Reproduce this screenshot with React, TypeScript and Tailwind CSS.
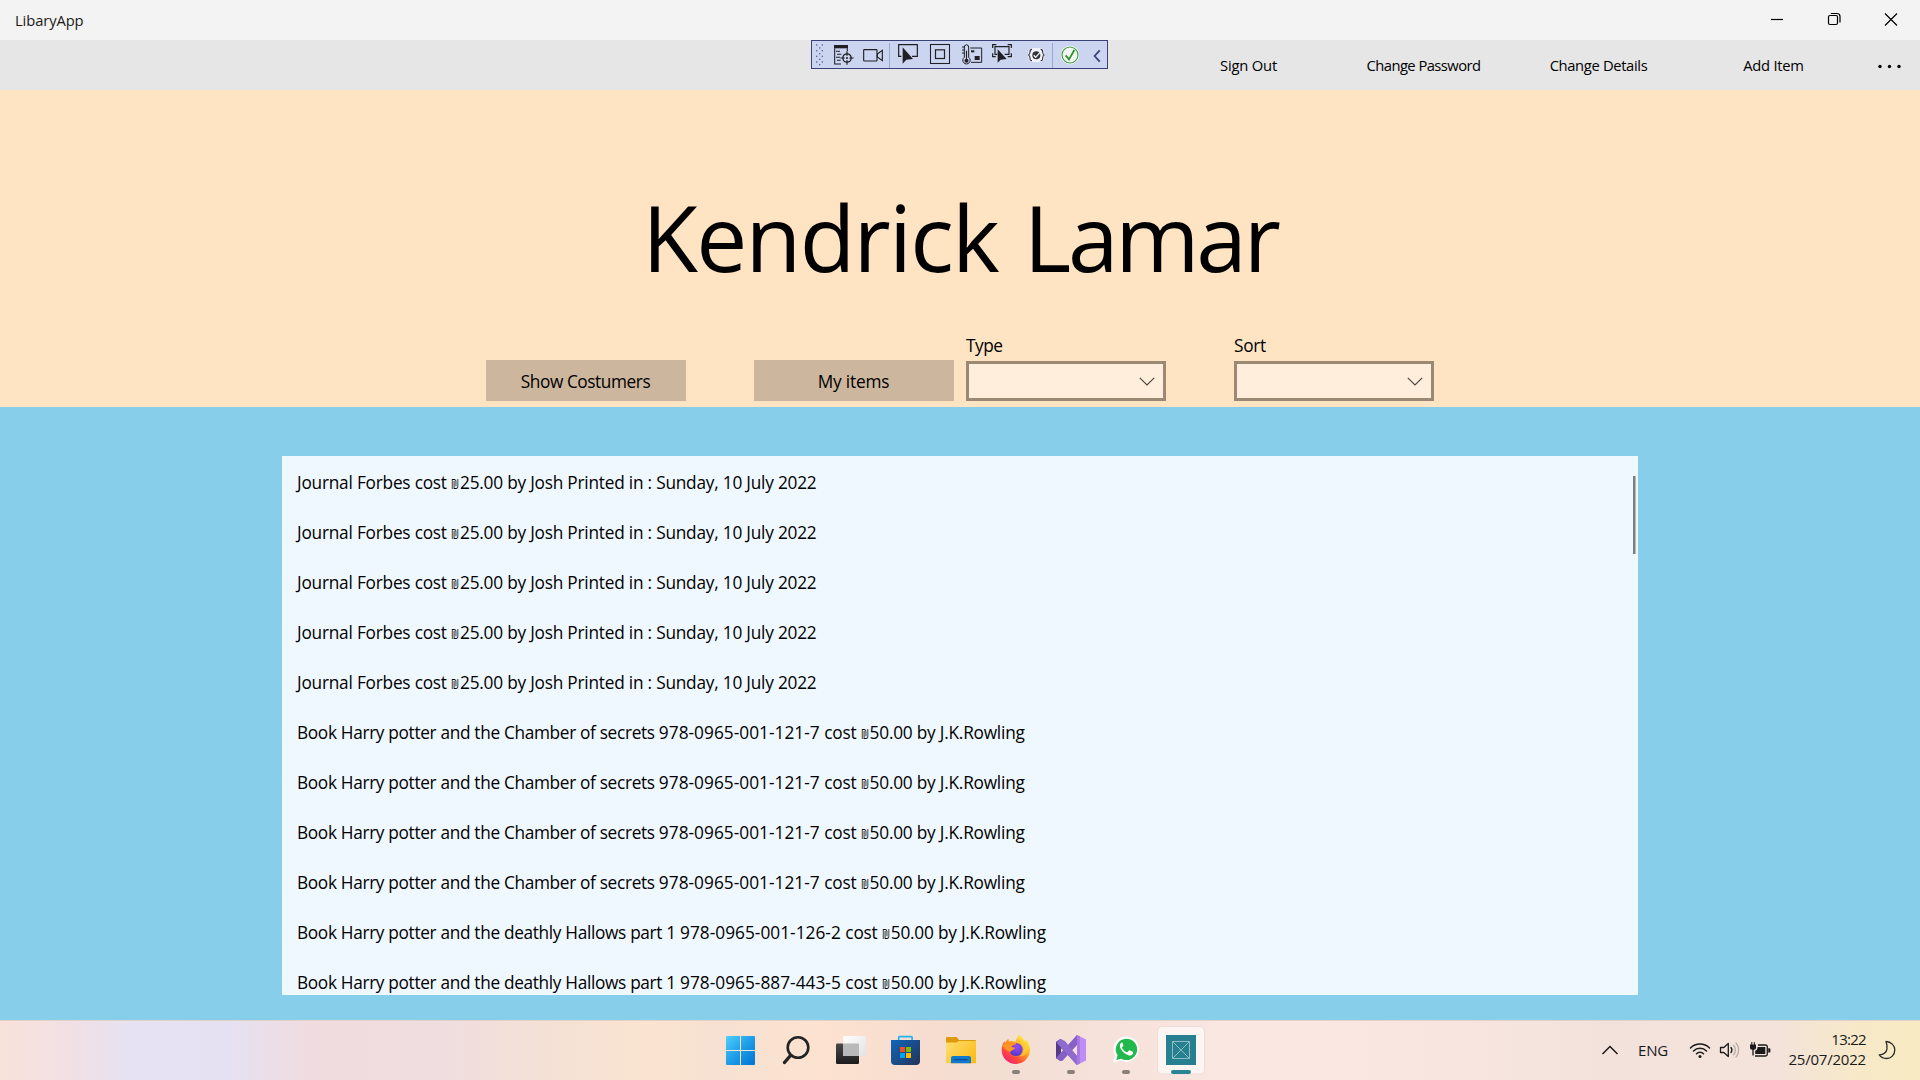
import type { ReactNode } from "react";

const SEGOE = "font-['Open_Sans','Liberation_Sans',sans-serif]";

type Item = { title: string; isbn?: string; price: string };

const journal: Item = {
  title: "Journal Forbes ",
  price: "25.00 by Josh Printed in : Sunday, 10 July 2022",
};
const chamber: Item = {
  title: "Book Harry potter and the Chamber of secrets ",
  isbn: "978-0965-001-121-7 ",
  price: "50.00 by J.K.Rowling",
};
const items: Item[] = [
  journal,
  journal,
  journal,
  journal,
  journal,
  chamber,
  chamber,
  chamber,
  chamber,
  {
    title: "Book Harry potter and the deathly Hallows part 1 ",
    isbn: "978-0965-001-126-2 ",
    price: "50.00 by J.K.Rowling",
  },
  {
    title: "Book Harry potter and the deathly Hallows part 1 ",
    isbn: "978-0965-887-443-5 ",
    price: "50.00 by J.K.Rowling",
  },
];

function TitleBar() {
  return (
    <header className="flex h-10 shrink-0 items-center justify-between bg-[#f3f3f3]">
      <span className="pl-[15px] text-[14.75px] leading-10 tracking-[-0.1px] text-[#1a1a1a]">LibaryApp</span>
      <div className="flex h-full text-black">
        <svg className="h-10 w-[57px]" viewBox="0 0 57 40" fill="none" stroke="currentColor">
          <path d="M23 19.5h12" strokeWidth="1.2" />
        </svg>
        <svg className="h-10 w-[57px]" viewBox="0 0 57 40" fill="none" stroke="currentColor">
          <rect x="23.5" y="15.5" width="9" height="9" rx="1.5" strokeWidth="1.2" />
          <path d="M25.8 13.5h6.200a3 3 0 0 1 3 3v6" strokeWidth="1.2" />
        </svg>
        <svg className="h-10 w-[58px]" viewBox="0 0 58 40" fill="none" stroke="currentColor">
          <path d="M23 13.500l12 12M35 13.500l-12 12" strokeWidth="1.2" />
        </svg>
      </div>
    </header>
  );
}

function CommandBar() {
  return (
    <nav className="flex h-[50px] shrink-0 justify-end bg-[#e6e6e6] text-[14.75px] leading-[50px] text-black">
      <button className="w-[175px] text-center tracking-[-0.2px]">Sign Out</button>
      <button className="w-[175px] text-center tracking-[-0.55px]">Change Password</button>
      <button className="w-[175px] text-center tracking-[-0.35px]">Change Details</button>
      <button className="w-[175px] text-center tracking-[-0.25px]">Add Item</button>
      <svg className="h-[50px] w-[59px]" viewBox="1 0 59 50" fill="currentColor">
        <circle cx="20" cy="26.5" r="1.7" />
        <circle cx="29.5" cy="26.5" r="1.7" />
        <circle cx="39" cy="26.5" r="1.7" />
      </svg>
    </nav>
  );
}

const gripDots = [
  [50, 45], [67, 45], [59, 54], [50, 62], [67, 62], [59, 71], [50, 79], [67, 79], [59, 88], [50, 96], [67, 96], [59, 104],
];

function DebugToolbar() {
  return (
    <div className="absolute left-[811px] top-10 flex h-[29px] w-[297px] border border-[#3b4279] bg-[#ccd5f0]">
      <svg className="h-[27px] w-4" viewBox="36 33 48 81">
        {gripDots.map(([x, y]) => (
          <rect key={`${x}-${y}`} x={x - 2} y={y - 2} width="4" height="4" fill="#5a639e" />
        ))}
      </svg>
      <svg className="h-[27px] w-[30px]" viewBox="84 33 90 81" fill="none" stroke="#1f1f24" strokeWidth="3.2">
        <rect x="102" y="45" width="42" height="10" fill="#1f1f24" stroke="none" />
        <path d="M104 55v47h19M108 64h12M111 73h13M108 82h12M111 91h11M142 55v8" />
        <circle cx="141" cy="84" r="12.5" strokeWidth="4" />
        <circle cx="141" cy="84" r="3" fill="#1f1f24" stroke="none" />
        <path d="M141 64v13M141 91v13M121 84h13M148 84h13" strokeWidth="3.6" />
      </svg>
      <svg className="h-[27px] w-[30px]" viewBox="174 33 90 81" fill="none" stroke="#1f1f24" strokeWidth="3.4">
        <rect x="191" y="59" width="40" height="34" rx="2" />
        <path d="M232 72l15-11v31l-15-11z" />
      </svg>
      <svg className="h-[27px] w-1" viewBox="264 33 12 81">
        <rect x="267" y="39" width="3" height="75" fill="#9aa7d2" />
      </svg>
      <svg className="h-[27px] w-8" viewBox="276 33 96 81">
        <path d="M304 79h-8V44h56v35h-16" fill="none" stroke="#1f1f24" strokeWidth="3.6" />
        <path d="M308 52v49l11-12 20-2z" fill="#1f1f24" />
      </svg>
      <svg className="h-[27px] w-8" viewBox="372 33 96 81" fill="none" stroke="#1f1f24">
        <rect x="391.5" y="43.5" width="57" height="57" strokeWidth="3.2" />
        <rect x="406.5" y="59.5" width="27" height="26" strokeWidth="3.6" />
      </svg>
      <svg className="h-[27px] w-[31px]" viewBox="468 33 93 81" fill="none" stroke="#1f1f24" strokeWidth="3">
        <path d="M493 82V51a6.500 6.500 0 0 1 13 0v31a11 11 0 1 1-13 0z" />
        <circle cx="499.500" cy="92" r="6" fill="#1f1f24" stroke="none" />
        <path d="M499.500 62v28" strokeWidth="3.4" />
        <path d="M486 51h7M486 60h7M486 69h7M511 54h34v43h-32" />
        <rect x="513" y="61" width="10" height="6" fill="#1f1f24" stroke="none" />
        <rect x="524" y="78" width="15" height="12" fill="#1f1f24" stroke="none" />
      </svg>
      <svg className="h-[27px] w-9" viewBox="561 33 108 81" fill="none" stroke="#1f1f24" strokeWidth="3.6">
        <path d="M578 54V44h11M623 44h11v10M578 70v10h9M623 80h11V70" />
        <path d="M592 73h-7V50h42v23h-13" />
        <path d="M593 58v40l9-9 18-2z" fill="#1f1f24" stroke="none" />
      </svg>
      <svg className="h-[27px] w-[26px]" viewBox="669 33 78 81" fill="none">
        <rect x="685" y="54" width="48" height="42" rx="14" fill="#f1f2f7" />
        <path
          d="M696 58c-6 0-6 3-6 8 0 6-1 8-5 9 4 1 5 4 5 9 0 6 0 8 6 8M722 58c6 0 6 3 6 8 0 6 1 8 5 9-4 1-5 4-5 9 0 6 0 8-6 8"
          stroke="#33333a"
          strokeWidth="3.4"
        />
        <circle cx="709" cy="76" r="12" fill="#33333a" />
        <path d="M701 76l6 6 13-15" stroke="#f1f2f7" strokeWidth="4" />
      </svg>
      <svg className="h-[27px] w-[7px]" viewBox="747 33 21 81">
        <rect x="756" y="39" width="3" height="75" fill="#9aa7d2" />
      </svg>
      <svg className="h-[27px] w-[29px]" viewBox="768 33 87 81" fill="none">
        <circle cx="810" cy="75" r="27.500" fill="#fff" />
        <circle cx="810" cy="75" r="24" fill="#f3f6f3" stroke="#3b9a3c" strokeWidth="3.4" />
        <path d="M797 76l10 12 16-28" stroke="#2f9430" strokeWidth="5.5" />
      </svg>
      <svg className="h-[27px] w-[22px]" viewBox="855 33 66 81" fill="none">
        <path d="M899 61l-15 17 15 17" stroke="#3b4279" strokeWidth="5.500" />
      </svg>
    </div>
  );
}

function ComboBox({ label, tracking }: { label: string; tracking: string }) {
  return (
    <div className="flex w-[200px] flex-col text-black">
      <label className={`mb-[3px] h-6 leading-6 ${tracking}`}>{label}</label>
      <div className="flex h-10 items-center justify-end border-3 border-[#9b8974] bg-[#ffeedc] pr-2">
        <svg className="h-[9px] w-4" viewBox="0 0 16 9" fill="none" stroke="#4d4640" strokeWidth="1.2">
          <path d="M.8.8L8 8 15.200.8" />
        </svg>
      </div>
    </div>
  );
}

function Hero() {
  return (
    <section className="flex h-[317px] shrink-0 flex-col items-center bg-[#ffe4c4] text-black">
      <h1 className="mt-[87px] flex h-[120px] gap-[25.5px] text-[91px] leading-[120px]">
        <span className="tracking-[-1.75px]">Kendrick</span>
        <span className="tracking-[-3.2px]">Lamar</span>
      </h1>
      <div className="mt-auto mb-1.5 flex items-end text-[17.25px]">
        <button className="h-[41px] w-[200px] bg-[#ccb69d] pr-px leading-[44px] tracking-[-0.42px]">Show Costumers</button>
        <button className="ml-[68px] h-[41px] w-[200px] bg-[#ccb69d] pr-px leading-[44px] tracking-[-0.2px]">My items</button>
        <div className="ml-3 flex gap-[68px]">
          <ComboBox label="Type" tracking="tracking-[-0.5px]" />
          <ComboBox label="Sort" tracking="tracking-[-0.3px]" />
        </div>
      </div>
    </section>
  );
}

function Library() {
  return (
    <main className="flex h-[613px] shrink-0 justify-center bg-[#87ceeb] pt-[49px] pb-[25px]">
      <div className="flex w-[1356px] justify-between overflow-hidden bg-[#f0f8ff] pt-0.5">
        <ul className="pl-[15px] text-[17.25px] tracking-[-0.22px] text-black">
          {items.map((item, i) => (
            <li key={i} className="h-[50px] leading-[50px] whitespace-pre">
              {item.isbn ? <span className="tracking-[-0.33px]">{item.title}</span> : item.title}
              {item.isbn && <span className="tracking-[0.03px]">{item.isbn}</span>}
              {"cost "}
              <span className="inline-block w-[9px] origin-left scale-x-[0.7] text-[14.5px] font-medium tracking-normal">₪</span>
              {item.price}
            </li>
          ))}
        </ul>
        <div className="mt-[18px] mr-0.5 h-[78px] w-[3px] border-r border-[#b5b9bd] bg-[#7c7f82]" />
      </div>
    </main>
  );
}

function TaskIcon({ children, running }: { children: ReactNode; running?: boolean }) {
  return (
    <svg className="h-[60px] w-[55px]" viewBox="0 0 55 60" fill="none">
      {children}
      {running && <rect x="24" y="50" width="8" height="4" rx="2" fill="#8a7f79" />}
    </svg>
  );
}

function Taskbar() {
  return (
    <footer className="flex h-[60px] shrink-0 border-t border-[#dfd3cc] bg-[linear-gradient(90deg,#f8e2da_0px,#f3e0e2_60px,#e6e2f3_135px,#e6e1f2_230px,#f0dcdf_310px,#f0dddf_440px,#f4e1d6_540px,#fae4d0_650px,#f6e1d2_720px,#fde2d0_820px,#f6ddd0_930px,#f2ded2_1010px,#f6e2da_1110px,#fbe7e2_1230px,#fae6e1_1400px,#f3e2dc_1600px,#f3e3da_1780px,#f7e9c8_1860px,#f8ebc2_1920px)] text-[#1a1a1a]">
      <div className="-mt-px ml-[713px] flex">
        <TaskIcon>
          <defs>
            <linearGradient id="win" x1="13" y1="16" x2="42" y2="45" gradientUnits="userSpaceOnUse">
              <stop stopColor="#4fd0fb" />
              <stop offset="0.5" stopColor="#1e9de8" />
              <stop offset="1" stopColor="#0272d3" />
            </linearGradient>
          </defs>
          <path d="M14 16h13v14H13V17a1 1 0 0 1 1-1zM28 16h13a1 1 0 0 1 1 1v13H28zM13 31h14v14H14a1 1 0 0 1-1-1zM28 31h14v13a1 1 0 0 1-1 1H28z" fill="url(#win)" />
        </TaskIcon>
        <TaskIcon>
          <circle cx="30" cy="27.500" r="10.300" stroke="#242426" strokeWidth="2.600" />
          <path d="M22.500 35.500L16.500 42.500" stroke="#242426" strokeWidth="3.400" strokeLinecap="round" />
        </TaskIcon>
        <TaskIcon>
          <defs>
            <linearGradient id="tvDark" x1="0" y1="23" x2="0" y2="44" gradientUnits="userSpaceOnUse">
              <stop stopColor="#4a4a4a" />
              <stop offset="1" stopColor="#1c1c1c" />
            </linearGradient>
            <linearGradient id="tvLight" x1="20" y1="16" x2="43" y2="36" gradientUnits="userSpaceOnUse">
              <stop stopColor="#ffffff" />
              <stop offset="1" stopColor="#e3e3e5" />
            </linearGradient>
          </defs>
          <rect x="13" y="23.500" width="23" height="20.500" rx="1.200" fill="url(#tvDark)" />
          <rect x="20" y="16" width="23" height="20" rx="1.200" fill="url(#tvLight)" />
          <rect x="20" y="23.500" width="16" height="12.500" fill="#b9b9b9" />
        </TaskIcon>
        <TaskIcon>
          <defs>
            <linearGradient id="store" x1="14" y1="20" x2="40" y2="45" gradientUnits="userSpaceOnUse">
              <stop stopColor="#0f66b8" />
              <stop offset="1" stopColor="#24345c" />
            </linearGradient>
          </defs>
          <path d="M20.700 21v-3.500a.8.8 0 0 1 .8-.8h11.800a.8.8 0 0 1 .8.8V21" stroke="#1fb6f0" strokeWidth="1.700" />
          <path d="M13 20h29v21a4 4 0 0 1-4 4H17a4 4 0 0 1-4-4z" fill="url(#store)" />
          <rect x="22" y="27" width="5" height="5" fill="#f25022" />
          <rect x="28" y="27" width="5" height="5" fill="#7fba00" />
          <rect x="22" y="33" width="5" height="5" fill="#00a4ef" />
          <rect x="28" y="33" width="5" height="5" fill="#ffb900" />
        </TaskIcon>
        <TaskIcon>
          <defs>
            <linearGradient id="folder" x1="14" y1="20" x2="42" y2="43" gradientUnits="userSpaceOnUse">
              <stop stopColor="#ffdf73" />
              <stop offset="1" stopColor="#fbb911" />
            </linearGradient>
          </defs>
          <path d="M14 17h9.500l2.500 3h16a1 1 0 0 1 1 1v4H13v-7a1 1 0 0 1 1-1z" fill="#dd9a0b" />
          <path d="M13 22.500h10.500l2.500-1.500h17v21.500a.8.8 0 0 1-.8.8H13.800a.8.8 0 0 1-.8-.8z" fill="url(#folder)" />
          <path d="M18 43.300V38a2 2 0 0 1 2-2h16a2 2 0 0 1 2 2v5.300z" fill="#0f78cf" />
          <path d="M21.500 39.700h12.500" stroke="#0b4f93" strokeWidth="1.200" strokeLinecap="round" />
        </TaskIcon>
        <TaskIcon running>
          <defs>
            <linearGradient id="fox" x1="38" y1="18" x2="18" y2="43" gradientUnits="userSpaceOnUse">
              <stop stopColor="#fff04a" />
              <stop offset="0.35" stopColor="#ffab1f" />
              <stop offset="0.7" stopColor="#ff4a3d" />
              <stop offset="1" stopColor="#f0187a" />
            </linearGradient>
            <radialGradient id="globe" cx="29" cy="27" r="8" gradientUnits="userSpaceOnUse">
              <stop stopColor="#9a4bf2" />
              <stop offset="1" stopColor="#5a3bd0" />
            </radialGradient>
          </defs>
          <path d="M31.500 15c2.500 1.800 4 3.500 5 6 .8-.4 1-.8 1.200-1.500 3 3 4.300 6.600 4.300 10.300C42 37.500 35.700 44 27.800 44S13.700 37.700 13.700 30c0-4 1.300-6.700 2.800-9 .2 1.200.4 1.700.8 2 .8-2 1.800-3.300 3.200-4.200 0 1.300.2 2 .9 2.700 2-.7 4.200-.5 6 .2 1-3 2-5 4.100-6.700z" fill="url(#fox)" />
          <circle cx="28" cy="29.500" r="6.600" fill="url(#globe)" />
          <path d="M14.500 26c3-4 9-5.500 13.800-2.300l-1.300 1c-2 .4-3.300 1-3.600 2.200 2 .2 4 .8 3.600 1.500-1.500 1.800-4 1.600-4.700 3.500-3-1-6-2.500-7.800-5.900z" fill="#ff9520" />
          <path d="M34 24c3 4 2 10-3 12.300 5 .5 9-3 9-8.300-1-4-4-7-7-9 0 2 0 3.500 1 5z" fill="#ffcf36" opacity="0.75" />
        </TaskIcon>
        <TaskIcon running>
          <path d="M13 22l4.500-3 7 6.500L20 30l-2-1.800v5.600L13 38z" fill="#6d4aa3" />
          <path d="M13 22v16l4.500 3 1.500-1.500-1-5.500v-8z" fill="#57398a" />
          <path d="M34 15v10L19.500 40.800 17.500 41l-4.500-3z" fill="#8661c5" />
          <path d="M34 15L17.500 37 13 38l4.500 3L34 24.500z" fill="#8661c5" />
          <path d="M17.500 19L34 36v9L13 22z" fill="#6f4dab" />
          <path d="M17.500 19l4.500 2 12 15v9L14 23z" fill="#8f6bcf" />
          <path d="M34 15l9 4.500v21L34 45z" fill="#bd8cf5" />
          <path d="M34 15l3 1.500v27L34 45z" fill="#a878e6" />
        </TaskIcon>
        <TaskIcon running>
          <path d="M28.500 16.500a12.600 12.600 0 1 1-5.600 24L15 42.500l2.200-7A12.600 12.600 0 0 1 28.500 16.500z" fill="#fff" />
          <path d="M28.300 18.700a10.700 10.700 0 1 1-5.100 20l-5 1.300 1.400-4.700a10.700 10.700 0 0 1 8.700-16.600z" fill="#22b84b" />
          <path d="M24.800 23.200c-.5-1-1.300-.7-2 0-1.500 1.600-1 4 .2 6 2 3.200 4.800 5.300 8 6.200 1.700.4 3.600-.6 4-2 .3-1.200 0-1.500-.6-1.800l-2.500-1.200c-.6-.3-1 0-1.300.4l-1 1.200c-.3.3-.6.400-1 .2-2-1-3.500-2.400-4.500-4.300-.2-.4-.1-.6.2-.9l.9-1.100c.2-.4.2-.6 0-1z" fill="#fff" />
        </TaskIcon>
        <TaskIcon>
          <rect x="4.500" y="6.500" width="47" height="47.500" rx="4.500" fill="#fdf5f2" stroke="#eddcd7" />
          <rect x="13" y="15" width="30" height="30" fill="#26808f" />
          <path d="M19.500 21.500h17v17h-17zM19.500 21.500l17 17M36.500 21.500l-17 17" stroke="#8fbcc2" />
          <rect x="18" y="50" width="20" height="4" rx="2" fill="#2a8594" />
        </TaskIcon>
      </div>
      <div className="-mt-px ml-auto flex items-center">
        <svg className="h-2.5 w-[18px]" viewBox="0 0 18 10" fill="none" stroke="currentColor" strokeWidth="1.500">
          <path d="M1.500 9L9 1.500 16.500 9" />
        </svg>
        <span className="ml-[19px] w-[31px] text-[15px] tracking-[-0.2px]">ENG</span>
        <svg className="ml-5 h-[18px] w-[22px]" viewBox="0 0 22 18" fill="none" stroke="currentColor" strokeWidth="1.500" strokeLinecap="round">
          <path d="M1.500 7a13.500 13.500 0 0 1 19 0M4.500 10a9.200 9.200 0 0 1 13 0M7.500 12.800a5 5 0 0 1 7 0" />
          <circle cx="11" cy="15.500" r="1.500" fill="currentColor" stroke="none" />
        </svg>
        <svg className="ml-2 h-[18px] w-[22px]" viewBox="0 0 22 18" fill="none" stroke="currentColor" strokeWidth="1.300" strokeLinecap="round" strokeLinejoin="round">
          <path d="M1.500 6.500h3.300L9.300 2.500v13l-4.500-4H1.500z" />
          <path d="M12 6.500a4 4 0 0 1 0 5" />
          <path d="M14.500 4.200a7 7 0 0 1 0 9.600M17 2a10.500 10.500 0 0 1 0 14" stroke="#b9aca8" />
        </svg>
        <svg className="ml-2 h-[18px] w-[22px]" viewBox="0 0 22 18" fill="none" stroke="currentColor" strokeWidth="1.300">
          <path d="M1 3.500h6v3.200A2 2 0 0 1 5 8.700H3a2 2 0 0 1-2-2zM2.300 1h1v3h-1zM4.800 1h1v3h-1z" fill="currentColor" stroke="none" />
          <path d="M4 8v6.500M9 4h7.500A1.800 1.800 0 0 1 18.300 5.800v7.400a1.800 1.800 0 0 1-1.800 1.800H6" />
          <path d="M8.500 6h7.800v7H6.200V9.800a3 3 0 0 0 2.300-3z" fill="currentColor" stroke="none" />
          <path d="M19.200 7.200h1a1.200 1.200 0 0 1 1.200 1.200v2a1.200 1.200 0 0 1-1.200 1.200h-1z" fill="currentColor" stroke="none" />
        </svg>
        <div className="ml-[9px] flex h-[42px] w-[86px] flex-col items-end text-[15px] leading-5">
          <span className="tracking-[-0.7px]">13:22</span>
          <span className="tracking-[-0.2px]">25/07/2022</span>
        </div>
        <svg className="mr-6 ml-3 h-5 w-[18px]" viewBox="0 0 18 20" fill="none" stroke="#2a2a2a" strokeWidth="1.300" strokeLinejoin="round">
          <path d="M8 1.500c5 .3 8.800 3.800 8.800 8.500 0 5-3.800 8.500-8.300 8.500-3.200 0-5.500-1.300-7.300-3.600 4.500-.4 7.300-2.500 7.800-6 .3-2.700-.2-5.200-1-7.400z" />
        </svg>
      </div>
    </footer>
  );
}

export default function App() {
  return (
    <div className={`relative flex h-[1080px] w-[1920px] flex-col overflow-hidden ${SEGOE}`}>
      <TitleBar />
      <CommandBar />
      <DebugToolbar />
      <Hero />
      <Library />
      <Taskbar />
    </div>
  );
}
